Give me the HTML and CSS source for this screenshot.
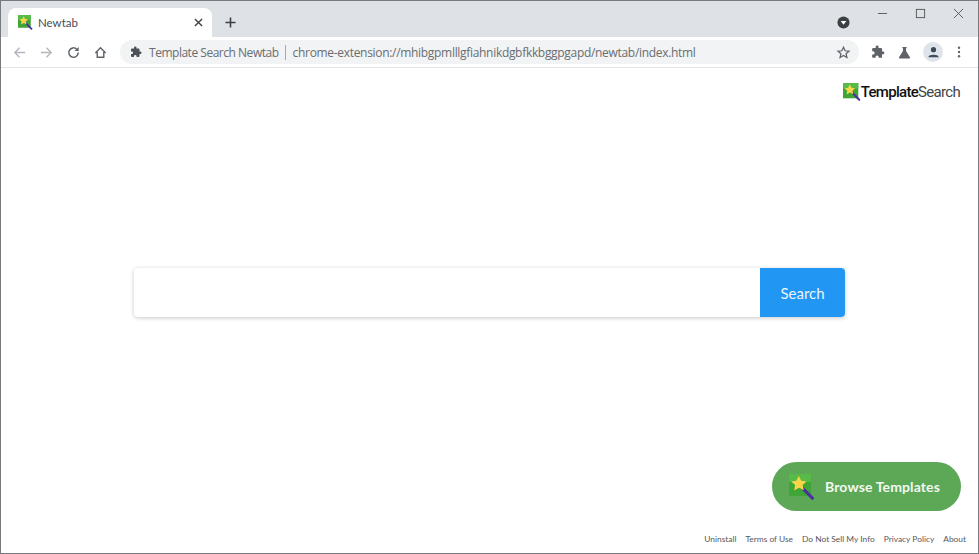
FILE: index.html
```html
<!DOCTYPE html>
<html lang="en">
<head>
<meta charset="utf-8">
<title>Newtab</title>
<link rel="stylesheet" href="styles.css">
</head>
<body>
<svg class="defs" width="0" height="0" aria-hidden="true">
  <symbol id="wand" viewBox="0 0 20 20">
    <rect x="0" y="0" width="17" height="17" fill="#3fa535"/>
    <rect x="0" y="0" width="17" height="6" fill="#58bb48"/>
    <path d="M9 9.500 L18 18.500" stroke="#4a2fa0" stroke-width="2.400" stroke-linecap="round"/>
    <path d="M7.500 1.500 L9.400 5.200 L13.500 5.700 L10.500 8.500 L11.400 12.500 L7.700 10.500 L4 12.700 L4.700 8.500 L1.700 5.800 L5.700 5.200 Z" fill="#f8d548"/>
  </symbol>
  <symbol id="puzzle" viewBox="0 0 24 24">
    <path d="M20.500 11H19V7a2 2 0 0 0-2-2h-4V3.500a2.500 2.500 0 0 0-5 0V5H4a2 2 0 0 0-2 2v3.800h1.500a2.700 2.700 0 0 1 0 5.400H2V20a2 2 0 0 0 2 2h3.800v-1.500a2.700 2.700 0 0 1 5.400 0V22H17a2 2 0 0 0 2-2v-4h1.500a2.500 2.500 0 0 0 0-5z" fill="currentColor"/>
  </symbol>
</svg>
<div class="window">
  <header class="tabstrip">
    <div class="tab">
      <svg class="favicon"><use href="#wand"/></svg>
      <span class="tab-title">Newtab</span>
      <svg class="tab-close" viewBox="0 0 10 10"><path d="M1 1 L9 9 M9 1 L1 9" stroke="#3c4043" stroke-width="1.500"/></svg>
    </div>
    <svg class="new-tab" viewBox="0 0 12 12"><path d="M6 0.500 V11.500 M0.500 6 H11.500" stroke="#3c4043" stroke-width="1.700"/></svg>
    <div class="strip-right">
      <svg class="tab-search" viewBox="0 0 14 14"><circle cx="7" cy="7" r="6.500" fill="#3c4043"/><path d="M4 5.500 H10 L7 9.500 Z" fill="#fff"/></svg>
      <div class="win-controls">
        <svg class="win-btn" viewBox="0 0 12 12"><path d="M1 6 H11" stroke="#555" stroke-width="1"/></svg>
        <svg class="win-btn" viewBox="0 0 12 12"><rect x="1.500" y="1.500" width="9" height="9" fill="none" stroke="#555" stroke-width="1"/></svg>
        <svg class="win-btn" viewBox="0 0 12 12"><path d="M1 1 L11 11 M11 1 L1 11" stroke="#555" stroke-width="1"/></svg>
      </div>
    </div>
  </header>
  <nav class="toolbar">
    <svg class="nav-icon" viewBox="0 0 16 16"><path d="M14 8 H3 M8 3 L3 8 L8 13" fill="none" stroke="#b4b7bb" stroke-width="1.500"/></svg>
    <svg class="nav-icon" viewBox="0 0 16 16"><path d="M2 8 H13 M8 3 L13 8 L8 13" fill="none" stroke="#b4b7bb" stroke-width="1.500"/></svg>
    <svg class="nav-icon" viewBox="0 0 16 16"><path d="M13 8 A5 5 0 1 1 11.500 4.500" fill="none" stroke="#5f6368" stroke-width="1.600"/><path d="M13.500 2 V6.500 H9 Z" fill="#5f6368"/></svg>
    <svg class="nav-icon" viewBox="0 0 16 16"><path d="M2.500 8.500 L8 3 L13.500 8.500 M4.500 7.500 V13 H11.500 V7.500" fill="none" stroke="#5f6368" stroke-width="1.500"/></svg>
    <div class="omnibox">
      <svg class="omni-puzzle"><use href="#puzzle"/></svg>
      <span class="omni-name">Template Search Newtab</span>
      <span class="omni-sep"></span>
      <span class="omni-url">chrome-extension://mhibgpmlllgfiahnikdgbfkkbggpgapd/newtab/index.html</span>
      <svg class="omni-star" viewBox="0 0 24 24"><path d="M12 3.500 L14.600 9.200 L20.800 9.800 L16.100 13.900 L17.500 20 L12 16.800 L6.500 20 L7.900 13.900 L3.200 9.800 L9.400 9.200 Z" fill="none" stroke="#5f6368" stroke-width="2"/></svg>
    </div>
    <svg class="tool-puzzle"><use href="#puzzle"/></svg>
    <svg class="tool-flask" viewBox="0 0 14 14"><path d="M4.500 1 H9.500 V2 H8.700 V5.500 L13 12.500 Q13.300 13.500 12 13.500 H2 Q0.700 13.500 1 12.500 L5.300 5.500 V2 H4.500 Z" fill="#5f6368"/></svg>
    <div class="avatar"><svg viewBox="0 0 14 14"><circle cx="7" cy="4" r="2.800" fill="#3c4a5e"/><path d="M1.500 12 C1.500 8.500 12.500 8.500 12.500 12 Z" fill="#3c4a5e"/></svg></div>
    <svg class="tool-menu" viewBox="0 0 4 14"><circle cx="2" cy="2" r="1.400" fill="#5f6368"/><circle cx="2" cy="7" r="1.400" fill="#5f6368"/><circle cx="2" cy="12" r="1.400" fill="#5f6368"/></svg>
  </nav>
  <main class="page">
    <div class="brand">
      <svg class="brand-icon"><use href="#wand"/></svg>
      <span class="brand-text"><span class="brand-strong">Template</span>Search</span>
    </div>
    <form class="search">
      <div class="search-input"></div>
      <div class="search-btn">Search</div>
    </form>
    <div class="browse-row">
      <div class="browse">
        <svg class="browse-icon"><use href="#wand"/></svg>
        <span class="browse-label">Browse Templates</span>
      </div>
    </div>
    <footer class="links">
      <span>Uninstall</span>
      <span>Terms of Use</span>
      <span>Do Not Sell My Info</span>
      <span>Privacy Policy</span>
      <span>About</span>
    </footer>
  </main>
</div>
</body>
</html>
```
FILE: styles.css
```css
* { box-sizing: border-box; }
html, body { margin: 0; padding: 0; }
body { width: 979px; height: 554px; overflow: hidden; background: #fff; font-family: Lato, "Open Sans", sans-serif; font-variant-ligatures: none; }
.defs { display: block; height: 0; }
.window { width: 979px; height: 554px; border: 1px solid #77797c; display: flex; flex-direction: column; }

.tabstrip { height: 36px; flex: none; background: #dee1e6; display: flex; align-items: flex-end; padding-left: 7px; }
.tab { width: 204px; height: 29px; background: #fff; border-radius: 8px 8px 0 0; display: flex; align-items: center; padding: 0 9px 0 10px; }
.favicon { width: 15px; height: 15px; flex: none; }
.tab-title { font: 11.500px Lato, sans-serif; color: #4a4d51; margin-left: 5px; flex: 1; }
.tab-close { width: 9px; height: 9px; flex: none; }
.new-tab { width: 11px; height: 11px; margin: 0 0 9px 13px; flex: none; }
.strip-right { flex: 1; height: 100%; display: flex; align-items: flex-start; justify-content: flex-end; }
.tab-search { width: 13px; height: 13px; margin: 15px 27px 0 0; flex: none; }
.win-controls { display: flex; gap: 27px; padding: 7px 14px 0 0; }
.win-btn { width: 11px; height: 11px; flex: none; }

.toolbar { height: 31px; flex: none; background: #fff; border-bottom: 1px solid #e2e4e7; display: flex; align-items: center; padding-left: 11px; }
.nav-icon { width: 15px; height: 15px; flex: none; margin-right: 12px; }
.omnibox { width: 739px; height: 24px; background: #f1f3f4; border-radius: 12px; display: flex; align-items: center; padding: 0 8px 0 10px; flex: none; }
.omni-puzzle { width: 12px; height: 12px; color: #4d5156; flex: none; }
.omni-name { font: 12px "Open Sans", sans-serif; letter-spacing: -0.480px; color: #6a6d71; margin-left: 7px; white-space: nowrap; }
.omni-sep { width: 1px; height: 15px; background: #a5a8ac; margin: 0 7px 0 6px; flex: none; }
.omni-url { font: 12px "Open Sans", sans-serif; letter-spacing: -0.310px; color: #6a6d71; white-space: nowrap; flex: 1; }
.omni-star { width: 15px; height: 15px; flex: none; }
.tool-puzzle { width: 14px; height: 14px; color: #5f6368; margin-left: 12px; flex: none; }
.tool-flask { width: 13px; height: 13px; margin-left: 13px; flex: none; }
.avatar { width: 20px; height: 20px; border-radius: 50%; background: #dfe3ea; margin-left: 12px; display: flex; align-items: center; justify-content: center; flex: none; }
.avatar svg { width: 13px; height: 13px; }
.tool-menu { width: 4px; height: 12px; margin-left: 14px; flex: none; }

.page { flex: 1; display: flex; flex-direction: column; min-height: 0; }
.brand { display: flex; align-items: center; justify-content: flex-end; padding: 14px 18px 0 0; height: 33px; flex: none; }
.brand-icon { width: 18px; height: 18px; flex: none; }
.brand-text { font: 15px Roboto, sans-serif; color: #444; letter-spacing: -0.700px; }
.brand-strong { color: #111; font-weight: 500; }
.search { width: 711px; height: 49px; margin: 167px 0 0 133px; display: flex; border-radius: 4px; background: #fff; box-shadow: 0 1px 4px rgba(0,0,0,.22); flex: none; }
.search-input { flex: 1; }
.search-btn { width: 85px; background: #2196f3; color: #e8f5ff; border-radius: 0 4px 4px 0; font: 15px/50px Lato, sans-serif; text-align: center; }
.browse-row { display: flex; justify-content: flex-end; padding-right: 17px; margin-top: 145px; flex: none; }
.browse { width: 189px; height: 49px; background: #5ca857; border-radius: 25px; display: flex; align-items: center; padding-left: 17px; }
.browse-icon { width: 26px; height: 26px; flex: none; }
.browse-label { font: 700 14px Lato, sans-serif; letter-spacing: 0.130px; color: #f2f8f0; margin-left: 10px; white-space: nowrap; }
.links { display: flex; justify-content: flex-end; gap: 9px; padding: 23px 12px 0 0; font: 8.400px Lato, sans-serif; color: #55585c; flex: none; }
```
